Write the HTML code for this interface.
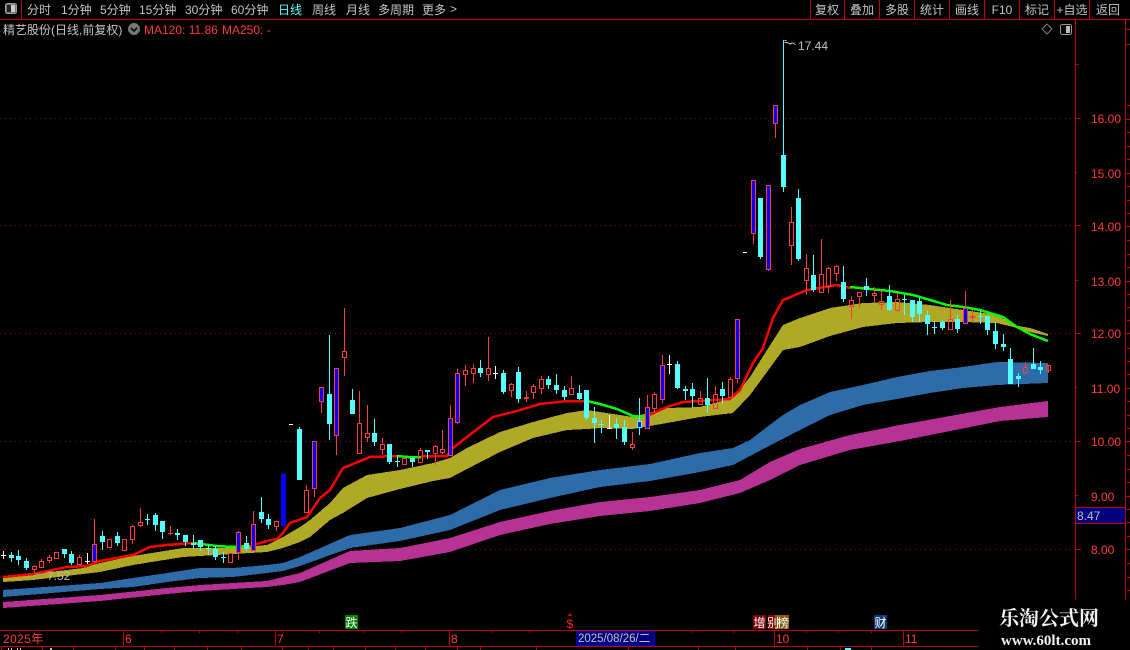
<!DOCTYPE html>
<html><head><meta charset="utf-8"><style>
html,body{margin:0;padding:0;background:#000;width:1130px;height:650px;overflow:hidden}
svg{position:absolute;left:0;top:0}
.t{font-family:"Liberation Sans","WenQuanYi Zen Hei","Noto Sans CJK SC",sans-serif;font-size:12px;fill:#c4c4c4}
.m{text-anchor:middle}
.r{fill:#ff3c3c}
.a{font-size:12px}
</style></head><body>
<svg width="1130" height="650" viewBox="0 0 1130 650" xmlns="http://www.w3.org/2000/svg">
<!-- grid -->
<g stroke="#8a1010" stroke-width="1" stroke-dasharray="1 4" fill="none" shape-rendering="crispEdges">
<path d="M0 118.500H1075M0 225.500H1075M0 333.500H1075M0 441.500H1075M0 549.500H1075"/>
</g>
<!-- bands -->
<g shape-rendering="crispEdges">
<polygon fill="#b0a926" points="3,578 33,574 83,568 100,563 133,556 183,548 233,548 267,545 283,537 300,527 310,520 330,503 343,488 367,475 400,470 433,463 450,458 467,448 500,432 533,422 567,413 587,410 600,412 633,417 667,408 700,407 733,398 750,377 767,350 783,325 800,318 830,308 863,303 897,302 930,305 963,310 997,315 1013,325 1030,328 1048,334 1048,336 1030,332 1013,327 997,323 963,322 930,322 897,323 863,327 830,336 800,347 783,350 767,372 750,395 733,413 700,417 667,423 633,429 600,428 587,429 567,430 533,438 500,452 467,469 450,478 433,481 400,489 367,498 343,513 330,520 310,537 300,542 283,548 267,552 233,554 183,557 133,565 100,572 83,574 33,580 3,582"/>
<polygon fill="#2d6ca9" points="3,590 100,583 133,578 167,573 200,568 233,568 267,565 283,563 300,557 350,535 400,528 450,515 500,490 550,478 600,470 650,464 700,453 733,448 750,440 767,427 783,415 800,405 830,392 863,385 897,377 930,371 963,367 997,362 1048,363 1048,383 997,385 963,388 930,393 897,399 863,405 830,415 800,430 767,447 733,465 700,472 650,481 600,487 550,498 500,510 450,530 400,541 350,548 300,566 283,571 267,573 233,577 200,578 167,582 133,587 100,589 3,597"/>
<polygon fill="#b83296" points="3,602 100,595 167,588 200,585 233,583 267,581 283,577 300,573 350,551 400,548 450,538 500,522 550,511 600,502 650,497 700,490 740,480 770,462 800,449 850,435 900,425 950,416 1000,407 1048,401 1048,417 1000,421 950,431 900,441 850,450 800,465 770,480 740,493 700,503 650,511 600,516 550,524 500,535 450,552 400,561 350,563 300,582 283,585 267,587 233,589 200,591 167,594 100,601 3,608"/>
</g>
<!-- MA lines -->
<g fill="none" stroke-width="2.500" shape-rendering="crispEdges">
<polyline stroke="#ff0000" points="3,577 33,574 67,567 87,566 100,561 133,555 150,547 167,545 193,543"/>
<polyline stroke="#00ff00" points="193,543 217,546 233,547 250,546"/>
<polyline stroke="#ff0000" points="250,546 267,541 277,539 283,533 290,523 307,517 320,498 330,490 343,468 363,460 370,457 397,456"/>
<polyline stroke="#00ff00" points="397,456 408,457 421,457"/>
<polyline stroke="#ff0000" points="421,456 447,456 453,448 467,437 493,417 517,411 540,404 567,401 587,401"/>
<polyline stroke="#00ff00" points="587,401 600,404 617,409 633,416 647,416"/>
<polyline stroke="#ff0000" points="647,416 667,407 683,402 730,399 740,390 753,363 763,348 773,318 783,300 788,298 807,290 837,285 850,288"/>
<polyline stroke="#00ff00" points="850,287 890,291 913,295 947,305 963,307 980,310 1003,317 1017,327 1030,334 1048,341"/>
</g>
<g shape-rendering="crispEdges">
<!-- cyan wicks -->
<path fill="none" stroke="#54ffff" d="M11.500 552V562M18.500 550V565M26.500 558V570M64.500 549V558M71.500 551V565M102.500 531V550M117.500 532V546M155.500 513V531M162.500 521V539M177.500 529V540M185.500 535V546M193.500 535V549M200.500 540V551M215.500 546V560M246.500 536V551M261.500 497V523M268.500 514V529M299.500 427V480M329.500 335V440M352.500 389V414M374.500 419V446M389.500 444V464M412.500 458V467M427.500 450V459M480.500 360V377M503.500 370V394M518.500 367V403M548.500 376V389M556.500 374V394M564.500 386V400M579.500 385V400M586.500 390V420M594.500 407V443M616.500 418V439M624.500 420V445M639.500 398V435M677.500 361V389M685.500 386V400M692.500 383V408M707.500 378V413M722.500 382V404M760.500 198V259M783.500 40V192M798.500 189V261M813.500 255V292M843.500 266V302M889.500 285V311M912.500 300V322M919.500 298V322M927.500 311V335M942.500 320V330M957.500 315V333M987.500 316V335M995.500 322V349M1003.500 334V351M1010.500 348V384M1018.500 373V387M1033.500 348V369M1040.500 361V374M147.500 514V525M208.500 545V555M223.500 552V563M397.500 455V467M601.500 420V433M866.500 278V296M904.500 295V315M934.500 321V334M980.500 311V324"/>
<!-- cyan bodies -->
<path fill="#54ffff" d="M9 555h5V558h-5zM16 556h5V560h-5zM24 561h5V568h-5zM62 549h5V554h-5zM69 554h5V563h-5zM100 536h5V542h-5zM115 536h5V543h-5zM153 515h5V525h-5zM160 521h5V532h-5zM175 533h5V535h-5zM183 535h5V542h-5zM191 543h5V545h-5zM198 540h5V547h-5zM213 549h5V557h-5zM244 543h5V549h-5zM259 512h5V519h-5zM266 519h5V525h-5zM297 429h5V480h-5zM327 394h5V424h-5zM350 400h5V414h-5zM372 433h5V442h-5zM387 444h5V462h-5zM410 458h5V462h-5zM425 450h5V452h-5zM478 368h5V373h-5zM501 373h5V392h-5zM516 372h5V399h-5zM546 379h5V385h-5zM554 385h5V390h-5zM562 390h5V397h-5zM577 393h5V399h-5zM584 390h5V418h-5zM592 418h5V423h-5zM614 424h5V428h-5zM622 427h5V442h-5zM637 421h5V428h-5zM675 364h5V388h-5zM683 389h5V391h-5zM690 389h5V396h-5zM705 398h5V405h-5zM720 389h5V396h-5zM758 198h5V257h-5zM781 155h5V187h-5zM796 198h5V259h-5zM811 275h5V290h-5zM841 282h5V299h-5zM887 296h5V310h-5zM910 300h5V317h-5zM917 301h5V314h-5zM925 315h5V324h-5zM940 322h5V328h-5zM955 319h5V329h-5zM985 316h5V330h-5zM993 331h5V344h-5zM1001 344h5V347h-5zM1008 359h5V384h-5zM1016 376h5V379h-5zM1031 364h5V369h-5zM1038 367h5V370h-5zM864 286h5V290h-5zM145 519h5V520h-5zM206 548h5V549h-5zM221 557h5V558h-5zM395 461h5V462h-5zM599 424h5V425h-5zM902 299h5V300h-5zM932 327h5V328h-5zM978 316h5V317h-5z"/>
<path fill="#0000ff" d="M638 422h3V427h-3zM281 474h5V526h-5z"/>
<!-- white -->
<path fill="none" stroke="#fff" d="M3.500 551V559M87.500 553V564M495.500 366V379M609.500 415V429M669.500 355V374"/>
<path fill="#fff" d="M1 555h5V556h-5zM85 561h5V562h-5zM493 373h5V374h-5zM607 428h5V429h-5zM667 364h5V365h-5zM289 424h4V425h-4zM743 252h4V253h-4z"/>
<!-- red hollow -->
<path fill="none" stroke="#ff3c3c" d="M34.500 565V566M32.500 566.500h4V569.500h-4zM34.500 570V573M41.500 559V561M39.500 561.500h4V567.500h-4zM49.500 555V557M47.500 557.500h4V560.500h-4zM49.500 561V563M54.500 552.500h4V558.500h-4zM79.500 555V557M77.500 557.500h4V564.500h-4zM107.500 539.500h4V547.500h-4zM122.500 539.500h4V550.500h-4zM132.500 525V526M130.500 526.500h4V539.500h-4zM132.500 540V544M140.500 508V522M138.500 522.500h4V525.500h-4zM140.500 526V527M228.500 553.500h4V562.500h-4zM274.500 521.500h4V526.500h-4zM276.500 527V531M304.500 490.500h4V512.500h-4zM306.500 485V490M344.500 308V351M342.500 351.500h4V357.500h-4zM344.500 358V376M359.500 391V423M357.500 423.500h4V453.500h-4zM367.500 405V433M365.500 433.500h4V437.500h-4zM367.500 438V442M382.500 438V444M380.500 444.500h4V449.500h-4zM382.500 450V455M402.500 458.500h4V464.500h-4zM420.500 448V450M418.500 450.500h4V462.500h-4zM435.500 445V446M433.500 446.500h4V453.500h-4zM435.500 454V465M442.500 430V449M440.500 449.500h4V452.500h-4zM442.500 453V454M465.500 365V370M463.500 370.500h4V374.500h-4zM465.500 375V386M473.500 364V368M471.500 368.500h4V373.500h-4zM473.500 374V383M488.500 337V368M486.500 368.500h4V374.500h-4zM488.500 375V381M511.500 383V384M509.500 384.500h4V390.500h-4zM511.500 391V397M533.500 384V386M531.500 386.500h4V392.500h-4zM533.500 393V399M541.500 376V379M539.500 379.500h4V388.500h-4zM541.500 389V394M569.500 388.500h4V394.500h-4zM571.500 376V388M632.500 432V444M630.500 444.500h4V447.500h-4zM632.500 448V450M654.500 392V394M652.500 394.500h4V408.500h-4zM654.500 409V413M700.500 391V398M698.500 398.500h4V404.500h-4zM715.500 386V394M713.500 394.500h4V408.500h-4zM730.500 377V379M728.500 379.500h4V397.500h-4zM791.500 207V222M789.500 222.500h4V245.500h-4zM791.500 246V265M806.500 254V268M804.500 268.500h4V280.500h-4zM806.500 281V295M821.500 239V274M819.500 274.500h4V292.500h-4zM828.500 267V268M826.500 268.500h4V286.500h-4zM828.500 287V293M836.500 265V266M834.500 266.500h4V273.500h-4zM836.500 274V281M851.500 296V300M849.500 300.500h4V306.500h-4zM851.500 307V319M859.500 297V308M857.500 292.500h4V296.500h-4zM874.500 287V293M872.500 293.500h4V295.500h-4zM874.500 296V302M881.500 290V301M879.500 301.500h4V304.500h-4zM881.500 305V310M897.500 293V299M895.500 299.500h4V310.500h-4zM950.500 300V319M948.500 319.500h4V329.500h-4zM1025.500 362V367M1023.500 367.500h4V372.500h-4zM1025.500 373V374M1048.500 365V373M1046.500 365.500h4V370.500h-4zM170.500 526V535M526.500 391V402M972.500 310V322"/>
<path fill="#ff3c3c" d="M168 533h5V534h-5zM524 397h5V399h-5zM970 316h5V318h-5z"/>
<!-- red blue -->
<path fill="none" stroke="#ff3c3c" d="M94.500 519V544M94.500 561V561M238.500 531V532M238.500 552V560M253.500 511V524M314.500 488V497M321.500 401V413M336.500 435V455M450.500 405V418M457.500 369V373M457.500 422V424M647.500 395V407M662.500 355V365M662.500 399V403M737.500 378V383M753.500 233V244M768.500 269V271M775.500 123V138M965.500 291V308"/>
<path fill="#0000ff" stroke="#ff3c3c" d="M92.500 544.500h4V561.500h-4zM236.500 532.500h4V552.500h-4zM251.500 524.500h4V550.500h-4zM312.500 441.500h4V488.500h-4zM319.500 387.500h4V401.500h-4zM334.500 368.500h4V435.500h-4zM448.500 418.500h4V455.500h-4zM455.500 373.500h4V422.500h-4zM645.500 407.500h4V428.500h-4zM660.500 365.500h4V399.500h-4zM735.500 319.500h4V378.500h-4zM751.500 180.500h4V233.500h-4zM766.500 185.500h4V269.500h-4zM773.500 105.500h4V123.500h-4zM963.500 308.500h4V323.500h-4z"/>
<!-- frame -->
<g stroke="#c00000" fill="none">
<path d="M0 19.500H1130M21.500 0V19M810.500 0V19M844.500 0V19M879.500 0V19M914.500 0V19M949.500 0V19M984.500 0V19M1019.500 0V19M1054.500 0V19M1089.500 0V19M1075.500 19V630M1125.500 19V630M1126 29.500H1130M1126 44.500H1130"/>
<path d="M0 630.500H978M0 646.500H978M123.500 630V646M275.500 630V646M449.500 630V646M576.500 630V646M774.500 630V646M903.500 630V646M161.500 630V633M199.500 630V633M237.500 630V633M319.500 630V633M363.500 630V633M401.500 630V633M491.500 630V633M529.500 630V633M692.500 630V633M733.500 630V633M806.500 630V633M838.500 630V633M871.500 630V633M1.500 646V650M42.500 646V650M73.500 646V650M115.500 646V650M144.500 646V650M174.500 646V650M207.500 646V650M241.500 646V650M282.500 646V650M308.500 646V650M333.500 646V650M365.500 646V650M395.500 646V650M425.500 646V650M457.500 646V650M480.500 646V650M536.500 646V650M628.500 646V650M698.500 646V650M735.500 646V650M807.500 646V650M840.500 646V650M871.500 646V650"/>
<path d="M1075 64.500H1079M1075 118.500H1081M1075 172.500H1078M1075 225.500H1081M1075 280.500H1078M1075 333.500H1081M1075 387.500H1078M1075 441.500H1081M1075 495.500H1078M1075 549.500H1081M1126 119.500H1130M1126 173.500H1130M1126 226.500H1130M1126 281.500H1130M1126 333.500H1130M1126 388.500H1130M1126 441.500H1130M1126 496.500H1130M1126 549.500H1130M1127 105.500H1130M1127 132.500H1130M1127 146.500H1130M1127 159.500H1130M1127 186.500H1130M1127 200.500H1130M1127 213.500H1130M1127 240.500H1130M1127 254.500H1130M1127 267.500H1130M1127 294.500H1130M1127 307.500H1130M1127 320.500H1130M1127 348.500H1130M1127 361.500H1130M1127 374.500H1130M1127 401.500H1130M1127 415.500H1130M1127 428.500H1130M1127 455.500H1130M1127 469.500H1130M1127 482.500H1130M1127 509.500H1130M1127 522.500H1130M1127 536.500H1130M1127 563.500H1130M1127 577.500H1130M1127 590.500H1130M1127 603.500H1130"/>
</g>
<!-- small bottom marks -->
<path fill="#c4c4c4" d="M8 648h1v2H8zM11 648h1v2h-1zM17 648h1v2h-1zM20 648h1v2h-1zM50 648h2v2h-2z"/>
<path fill="#54ffff" d="M845 648h6v2h-6z"/>
<!-- top-left icon -->
<rect x="5.500" y="3.500" width="11" height="10" rx="2" fill="#777" stroke="#999"/>
<rect x="7" y="5" width="4" height="7" fill="#222"/>
<rect x="11" y="5" width="4" height="7" fill="#ccc"/>
<!-- title icon -->
<circle cx="134" cy="29" r="6" fill="#777"/>
<path d="M131 28l3 3 3-3" fill="none" stroke="#111" stroke-width="1.500"/>
<path d="M1047 25l5 5-5 5-5-5z" transform="translate(0 -1)" fill="none" stroke="#777"/>
<rect x="1060.500" y="24.500" width="11" height="10" rx="2" fill="none" stroke="#999"/>
<rect x="1066" y="26" width="4" height="7" fill="#bbb"/>
<path d="M784.500 40.500h2M784.500 42.500h3l2 1.500 3-1 3 1.500" fill="none" stroke="#c4c4c4"/>
<path d="M35 574h11M35 576h2" stroke="#999" fill="none"/>
<!-- box -->
<rect x="1075.500" y="507.500" width="50" height="16" fill="#000080" stroke="#c00000"/>
</g>
<!-- menu text -->
<g class="t">
<text x="27" y="14" class="t">分时</text>
<text x="61" y="14" class="t">1分钟</text>
<text x="100" y="14" class="t">5分钟</text>
<text x="139" y="14" class="t">15分钟</text>
<text x="185" y="14" class="t">30分钟</text>
<text x="231" y="14" class="t">60分钟</text>
<text x="278" y="14" class="t" style="fill:#54ffff">日线</text>
<text x="312" y="14" class="t">周线</text>
<text x="346" y="14" class="t">月线</text>
<text x="378" y="14" class="t">多周期</text>
<text x="422" y="14" class="t">更多</text>
<text x="450" y="13" class="t">&gt;</text>
<text x="827" y="14" class="t m">复权</text>
<text x="862" y="14" class="t m">叠加</text>
<text x="897" y="14" class="t m">多股</text>
<text x="932" y="14" class="t m">统计</text>
<text x="967" y="14" class="t m">画线</text>
<text x="1002" y="14" class="t m">F10</text>
<text x="1037" y="14" class="t m">标记</text>
<text x="1072" y="14" class="t m">+自选</text>
<text x="1108" y="14" class="t m">返回</text>
<text x="3" y="34" class="t">精艺股份(日线,前复权)</text>
<text x="144" y="34" class="t r">MA120: 11.86</text>
<text x="222" y="34" class="t r">MA250: -</text>
<text x="798" y="50" class="t">17.44</text>
<text x="47" y="580" class="t" style="fill:#bbb">7.52</text>
<text x="1091" y="123" class="t r a">16.00</text>
<text x="1091" y="178" class="t r a">15.00</text>
<text x="1091" y="231" class="t r a">14.00</text>
<text x="1091" y="286" class="t r a">13.00</text>
<text x="1091" y="338" class="t r a">12.00</text>
<text x="1091" y="393" class="t r a">11.00</text>
<text x="1091" y="446" class="t r a">10.00</text>
<text x="1091" y="501" class="t r a">9.00</text>
<text x="1091" y="554" class="t r a">8.00</text>
<text x="1077" y="520" class="t">8.47</text>
<text x="3" y="643" class="t r" style="letter-spacing:.4px">2025年</text>
<text x="125" y="643" class="t r">6</text>
<text x="277" y="643" class="t r">7</text>
<text x="451" y="643" class="t r">8</text>
<text x="776" y="643" class="t r">10</text>
<text x="905" y="643" class="t r">11</text>
</g>
<!-- date box -->
<rect x="576.500" y="631.500" width="78" height="14" fill="#000080" stroke="#0000c0"/>
<text x="578" y="642" class="t" style="font-size:11.500px">2025/08/26/二</text>
<!-- badges -->
<rect x="345" y="615" width="13" height="14" fill="#008000"/>
<text x="345.500" y="627" class="t" style="fill:#fff">跌</text>
<path d="M570 613l-2 3h4z" fill="#f00"/>
<text x="566.500" y="628" class="t" style="fill:#f22">$</text>
<rect x="753" y="615" width="13" height="14" fill="#800000"/>
<text x="753.500" y="627" class="t" style="fill:#fff">增</text>
<rect x="768" y="615" width="7" height="14" fill="#800000"/>
<rect x="775" y="615" width="14" height="14" fill="#8a5a10"/>
<text x="767" y="627" class="t" style="fill:#fff">别</text>
<text x="777" y="627" class="t" style="fill:#fff">榜</text>
<rect x="874" y="615" width="13" height="14" fill="#103a70"/>
<text x="874.500" y="627" class="t" style="fill:#fff">财</text>
<!-- logo -->
<rect x="979" y="600" width="151" height="50" fill="#000"/>
<text x="999" y="625" style="font-family:'Liberation Serif','Noto Serif CJK SC',serif;font-size:20px;font-weight:700;fill:#f2f2f2">乐淘公式网</text>
<text x="1001" y="645" style="font-family:'Liberation Serif',serif;font-size:15px;font-weight:700;fill:#f2f2f2">www.60lt.com</text>
</svg>
</body></html>
